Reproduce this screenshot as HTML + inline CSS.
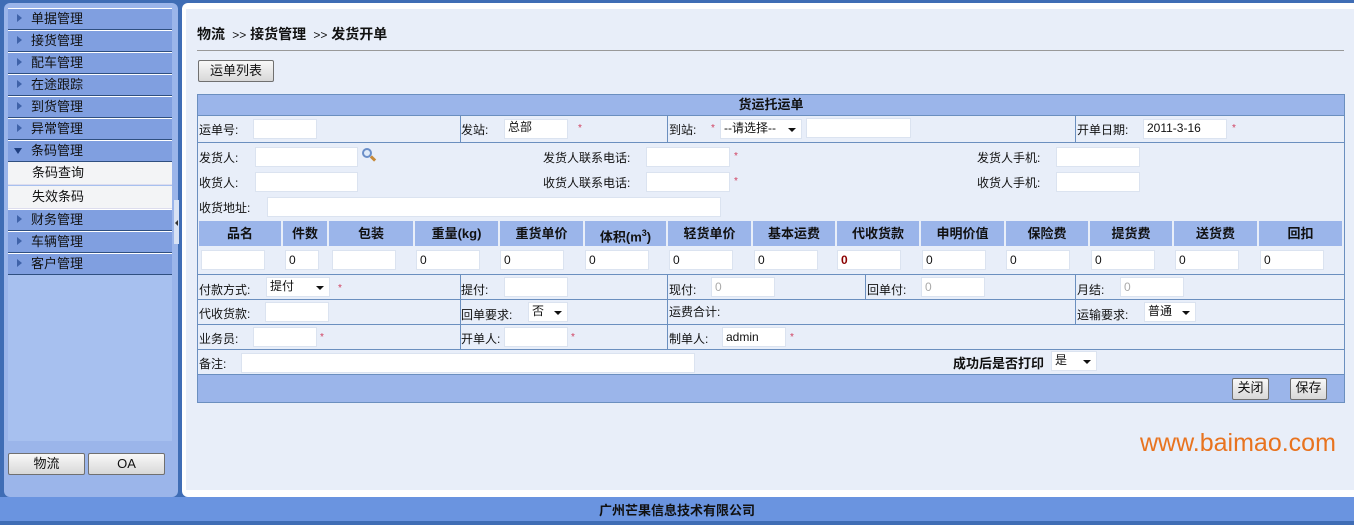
<!DOCTYPE html>
<html><head><meta charset="utf-8">
<style>
*{margin:0;padding:0;box-sizing:border-box}
html,body{width:1354px;height:521px}
body{position:relative;overflow:hidden;background:#3f6db5;font-family:"Liberation Sans","Noto Sans CJK SC",sans-serif;font-size:12px;color:#111}
div,span{position:absolute}
.m{left:8px;width:164px;height:22px;background:#809fe0;border-top:1px solid #fff;border-bottom:1px solid #2f4f80;font-size:13px;line-height:19px;padding-left:23px;color:#111}
.m:before{content:"";position:absolute;left:9px;top:5px;border-left:5px solid #3f62a8;border-top:4px solid transparent;border-bottom:4px solid transparent}
.m.o:before{left:6px;top:7px;border-top:6px solid #1f3f7f;border-left:4px solid transparent;border-right:4px solid transparent;border-bottom:0}
.sb{left:8px;width:164px;height:23px;background:#f3f4f6;font-size:13px;line-height:22px;padding-left:24px;border-bottom:1px solid #dde}
.btn{background:linear-gradient(#f8f8f8,#d8d8d8);border:1px solid #707070;border-radius:2px;text-align:center;font-size:13px;color:#111}
.t{white-space:nowrap;font-size:12px;line-height:14px}
.i{background:#fff;border:1px solid #dbe3f0;height:20px;font-size:12px;line-height:18px;padding-left:3px}
.g{color:#aaa}
.r{color:#d04060;font-size:10px}
.s:after{content:"";position:absolute;right:5px;top:8px;border-top:4px solid #111;border-left:4px solid transparent;border-right:4px solid transparent}
.hl{height:1px;background:#6b8fbf}
.vl{width:1px;background:#6b8fbf}
.h{background:#9bb5ea;height:25px;top:221px;font-weight:bold;font-size:13px;text-align:center;line-height:25px}
</style></head><body>
<div style="left:4px;top:3px;width:174px;height:494px;background:#9bb5ea;border-radius:6px"></div>
<div style="left:8px;top:9px;width:164px;height:432px;background:#a7c0ef"></div>
<div class="m" style="top:8px">单据管理</div>
<div class="m" style="top:30px">接货管理</div>
<div class="m" style="top:52px">配车管理</div>
<div class="m" style="top:74px">在途跟踪</div>
<div class="m" style="top:96px">到货管理</div>
<div class="m" style="top:118px">异常管理</div>
<div class="m o" style="top:140px">条码管理</div>
<div class="sb" style="top:162px">条码查询</div>
<div class="sb" style="top:186px">失效条码</div>
<div class="m" style="top:209px">财务管理</div>
<div class="m" style="top:231px">车辆管理</div>
<div class="m" style="top:253px">客户管理</div>
<div style="left:174px;top:200px;width:5px;height:44px;background:#d8e2f4"></div>
<div style="left:175px;top:220px;border-right:3px solid #333;border-top:3px solid transparent;border-bottom:3px solid transparent"></div>
<div class="btn" style="left:8px;top:453px;width:77px;height:22px;line-height:19px">物流</div>
<div class="btn" style="left:88px;top:453px;width:77px;height:22px;line-height:20px">OA</div>
<div style="left:182px;top:3px;width:1172px;height:494px;background:#fff;border-radius:6px 0 0 6px"></div>
<div style="left:186px;top:9px;width:1168px;height:481px;background:#e8eef9"></div>
<div class="t" style="left:197px;top:26px;font-size:14px;font-weight:bold;line-height:16px">物流 <span style="position:static;font-weight:normal;font-size:12px">&nbsp;&gt;&gt;</span> 接货管理 <span style="position:static;font-weight:normal;font-size:12px">&nbsp;&gt;&gt;</span> 发货开单</div>
<div style="left:197px;top:50px;width:1147px;height:1px;background:#999"></div>
<div class="btn" style="left:198px;top:60px;width:76px;height:22px;line-height:19px">运单列表</div>
<div style="left:197px;top:94px;width:1148px;height:309px;border:1px solid #6b8fbf;background:#e8eef9"></div>
<div style="left:198px;top:95px;width:1146px;height:20px;background:#9bb5ea;text-align:center;font-weight:bold;font-size:13px;line-height:20px">货运托运单</div>
<div class="hl" style="left:198px;top:115px;width:1146px"></div>
<div class="hl" style="left:198px;top:142px;width:1146px"></div>
<div class="vl" style="left:460px;top:116px;height:26px"></div>
<div class="vl" style="left:667px;top:116px;height:26px"></div>
<div class="vl" style="left:1075px;top:116px;height:26px"></div>
<div class="t" style="left:199px;top:123px">运单号:</div><div class="i" style="left:253px;top:119px;width:64px"></div>
<div class="t" style="left:461px;top:123px">发站:</div><div class="i" style="left:504px;top:119px;width:64px;line-height:14px">总部</div><span class="r" style="left:578px;top:123px">*</span>
<div class="t" style="left:669px;top:123px">到站:</div><span class="r" style="left:711px;top:123px">*</span><div class="i s" style="left:720px;top:119px;width:82px;line-height:16px">--请选择--</div><div class="i" style="left:806px;top:118px;width:105px"></div>
<div class="t" style="left:1077px;top:123px">开单日期:</div><div class="i" style="left:1143px;top:119px;width:84px;line-height:16px">2011-3-16</div><span class="r" style="left:1232px;top:123px">*</span>
<div class="t" style="left:199px;top:151px">发货人:</div><div class="i" style="left:255px;top:147px;width:103px"></div>
<div style="left:362px;top:148px;width:10px;height:10px;border:2px solid #6a8ec8;border-radius:50%;background:#dfeaf8"></div><div style="left:370px;top:157px;width:6px;height:3px;background:#c78a3a;transform:rotate(45deg)"></div>
<div class="t" style="left:543px;top:151px">发货人联系电话:</div><div class="i" style="left:646px;top:147px;width:84px"></div><span class="r" style="left:734px;top:151px">*</span>
<div class="t" style="left:977px;top:151px">发货人手机:</div><div class="i" style="left:1056px;top:147px;width:84px"></div>
<div class="t" style="left:199px;top:176px">收货人:</div><div class="i" style="left:255px;top:172px;width:103px"></div>
<div class="t" style="left:543px;top:176px">收货人联系电话:</div><div class="i" style="left:646px;top:172px;width:84px"></div><span class="r" style="left:734px;top:176px">*</span>
<div class="t" style="left:977px;top:176px">收货人手机:</div><div class="i" style="left:1056px;top:172px;width:84px"></div>
<div class="t" style="left:199px;top:201px">收货地址:</div><div class="i" style="left:267px;top:197px;width:454px"></div>
<div class="h" style="left:199px;width:82px">品名</div>
<div class="h" style="left:283px;width:44px">件数</div>
<div class="h" style="left:329px;width:84px">包装</div>
<div class="h" style="left:415px;width:83px">重量(kg)</div>
<div class="h" style="left:500px;width:83px">重货单价</div>
<div class="h" style="left:585px;width:81px">体积(m<sup style="font-size:9px">3</sup>)</div>
<div class="h" style="left:668px;width:83px">轻货单价</div>
<div class="h" style="left:753px;width:82px">基本运费</div>
<div class="h" style="left:837px;width:82px">代收货款</div>
<div class="h" style="left:921px;width:83px">申明价值</div>
<div class="h" style="left:1006px;width:82px">保险费</div>
<div class="h" style="left:1090px;width:82px">提货费</div>
<div class="h" style="left:1174px;width:83px">送货费</div>
<div class="h" style="left:1259px;width:83px">回扣</div>
<div class="i" style="left:201px;top:250px;width:64px"></div>
<div class="i" style="left:285px;top:250px;width:34px">0</div>
<div class="i" style="left:332px;top:250px;width:64px"></div>
<div class="i" style="left:416px;top:250px;width:64px">0</div>
<div class="i" style="left:500px;top:250px;width:64px">0</div>
<div class="i" style="left:585px;top:250px;width:64px">0</div>
<div class="i" style="left:669px;top:250px;width:64px">0</div>
<div class="i" style="left:754px;top:250px;width:64px">0</div>
<div class="i" style="left:837px;top:250px;width:64px;color:#8b0000;font-weight:bold">0</div>
<div class="i" style="left:922px;top:250px;width:64px">0</div>
<div class="i" style="left:1006px;top:250px;width:64px">0</div>
<div class="i" style="left:1091px;top:250px;width:64px">0</div>
<div class="i" style="left:1175px;top:250px;width:64px">0</div>
<div class="i" style="left:1260px;top:250px;width:64px">0</div>
<div class="hl" style="left:198px;top:274px;width:1146px"></div>
<div class="hl" style="left:198px;top:299px;width:1146px"></div>
<div class="hl" style="left:198px;top:324px;width:1146px"></div>
<div class="hl" style="left:198px;top:349px;width:1146px"></div>
<div class="hl" style="left:198px;top:374px;width:1146px"></div>
<div class="vl" style="left:460px;top:275px;height:74px"></div>
<div class="vl" style="left:667px;top:275px;height:74px"></div>
<div class="vl" style="left:865px;top:275px;height:24px"></div>
<div class="vl" style="left:1075px;top:275px;height:49px"></div>
<div class="t" style="left:199px;top:283px">付款方式:</div><div class="i s" style="left:266px;top:277px;width:64px;line-height:16px">提付</div><span class="r" style="left:338px;top:283px">*</span>
<div class="t" style="left:461px;top:283px">提付:</div><div class="i" style="left:504px;top:277px;width:64px"></div>
<div class="t" style="left:669px;top:283px">现付:</div><div class="i g" style="left:711px;top:277px;width:64px">0</div>
<div class="t" style="left:867px;top:283px">回单付:</div><div class="i g" style="left:921px;top:277px;width:64px">0</div>
<div class="t" style="left:1077px;top:283px">月结:</div><div class="i g" style="left:1120px;top:277px;width:64px">0</div>
<div class="t" style="left:199px;top:307px">代收货款:</div><div class="i" style="left:265px;top:302px;width:64px"></div>
<div class="t" style="left:461px;top:308px">回单要求:</div><div class="i s" style="left:528px;top:302px;width:40px;line-height:16px">否</div>
<div class="t" style="left:669px;top:305px">运费合计:</div>
<div class="t" style="left:1077px;top:308px">运输要求:</div><div class="i s" style="left:1144px;top:302px;width:52px;line-height:16px">普通</div>
<div class="t" style="left:199px;top:332px">业务员:</div><div class="i" style="left:253px;top:327px;width:64px"></div><span class="r" style="left:320px;top:332px">*</span>
<div class="t" style="left:461px;top:332px">开单人:</div><div class="i" style="left:504px;top:327px;width:64px"></div><span class="r" style="left:571px;top:332px">*</span>
<div class="t" style="left:669px;top:332px">制单人:</div><div class="i" style="left:722px;top:327px;width:64px;line-height:18px">admin</div><span class="r" style="left:790px;top:332px">*</span>
<div class="t" style="left:199px;top:357px">备注:</div><div class="i" style="left:241px;top:353px;width:454px"></div>
<div class="t" style="left:953px;top:357px;font-weight:bold;font-size:13px">成功后是否打印</div><div class="i s" style="left:1051px;top:351px;width:46px;line-height:16px">是</div>
<div style="left:198px;top:375px;width:1146px;height:27px;background:#9bb5ea"></div>
<div class="btn" style="left:1232px;top:378px;width:37px;height:22px;line-height:18px">关闭</div>
<div class="btn" style="left:1290px;top:378px;width:37px;height:22px;line-height:18px">保存</div>
<div class="t" style="left:1140px;top:428px;font-size:25px;line-height:30px;color:#e8731f">www.baimao.com</div>
<div style="left:0;top:497px;width:1354px;height:24px;background:#6a94e0;text-align:center;font-weight:bold;font-size:13px;line-height:28px;color:#111">广州芒果信息技术有限公司</div>
</body></html>
